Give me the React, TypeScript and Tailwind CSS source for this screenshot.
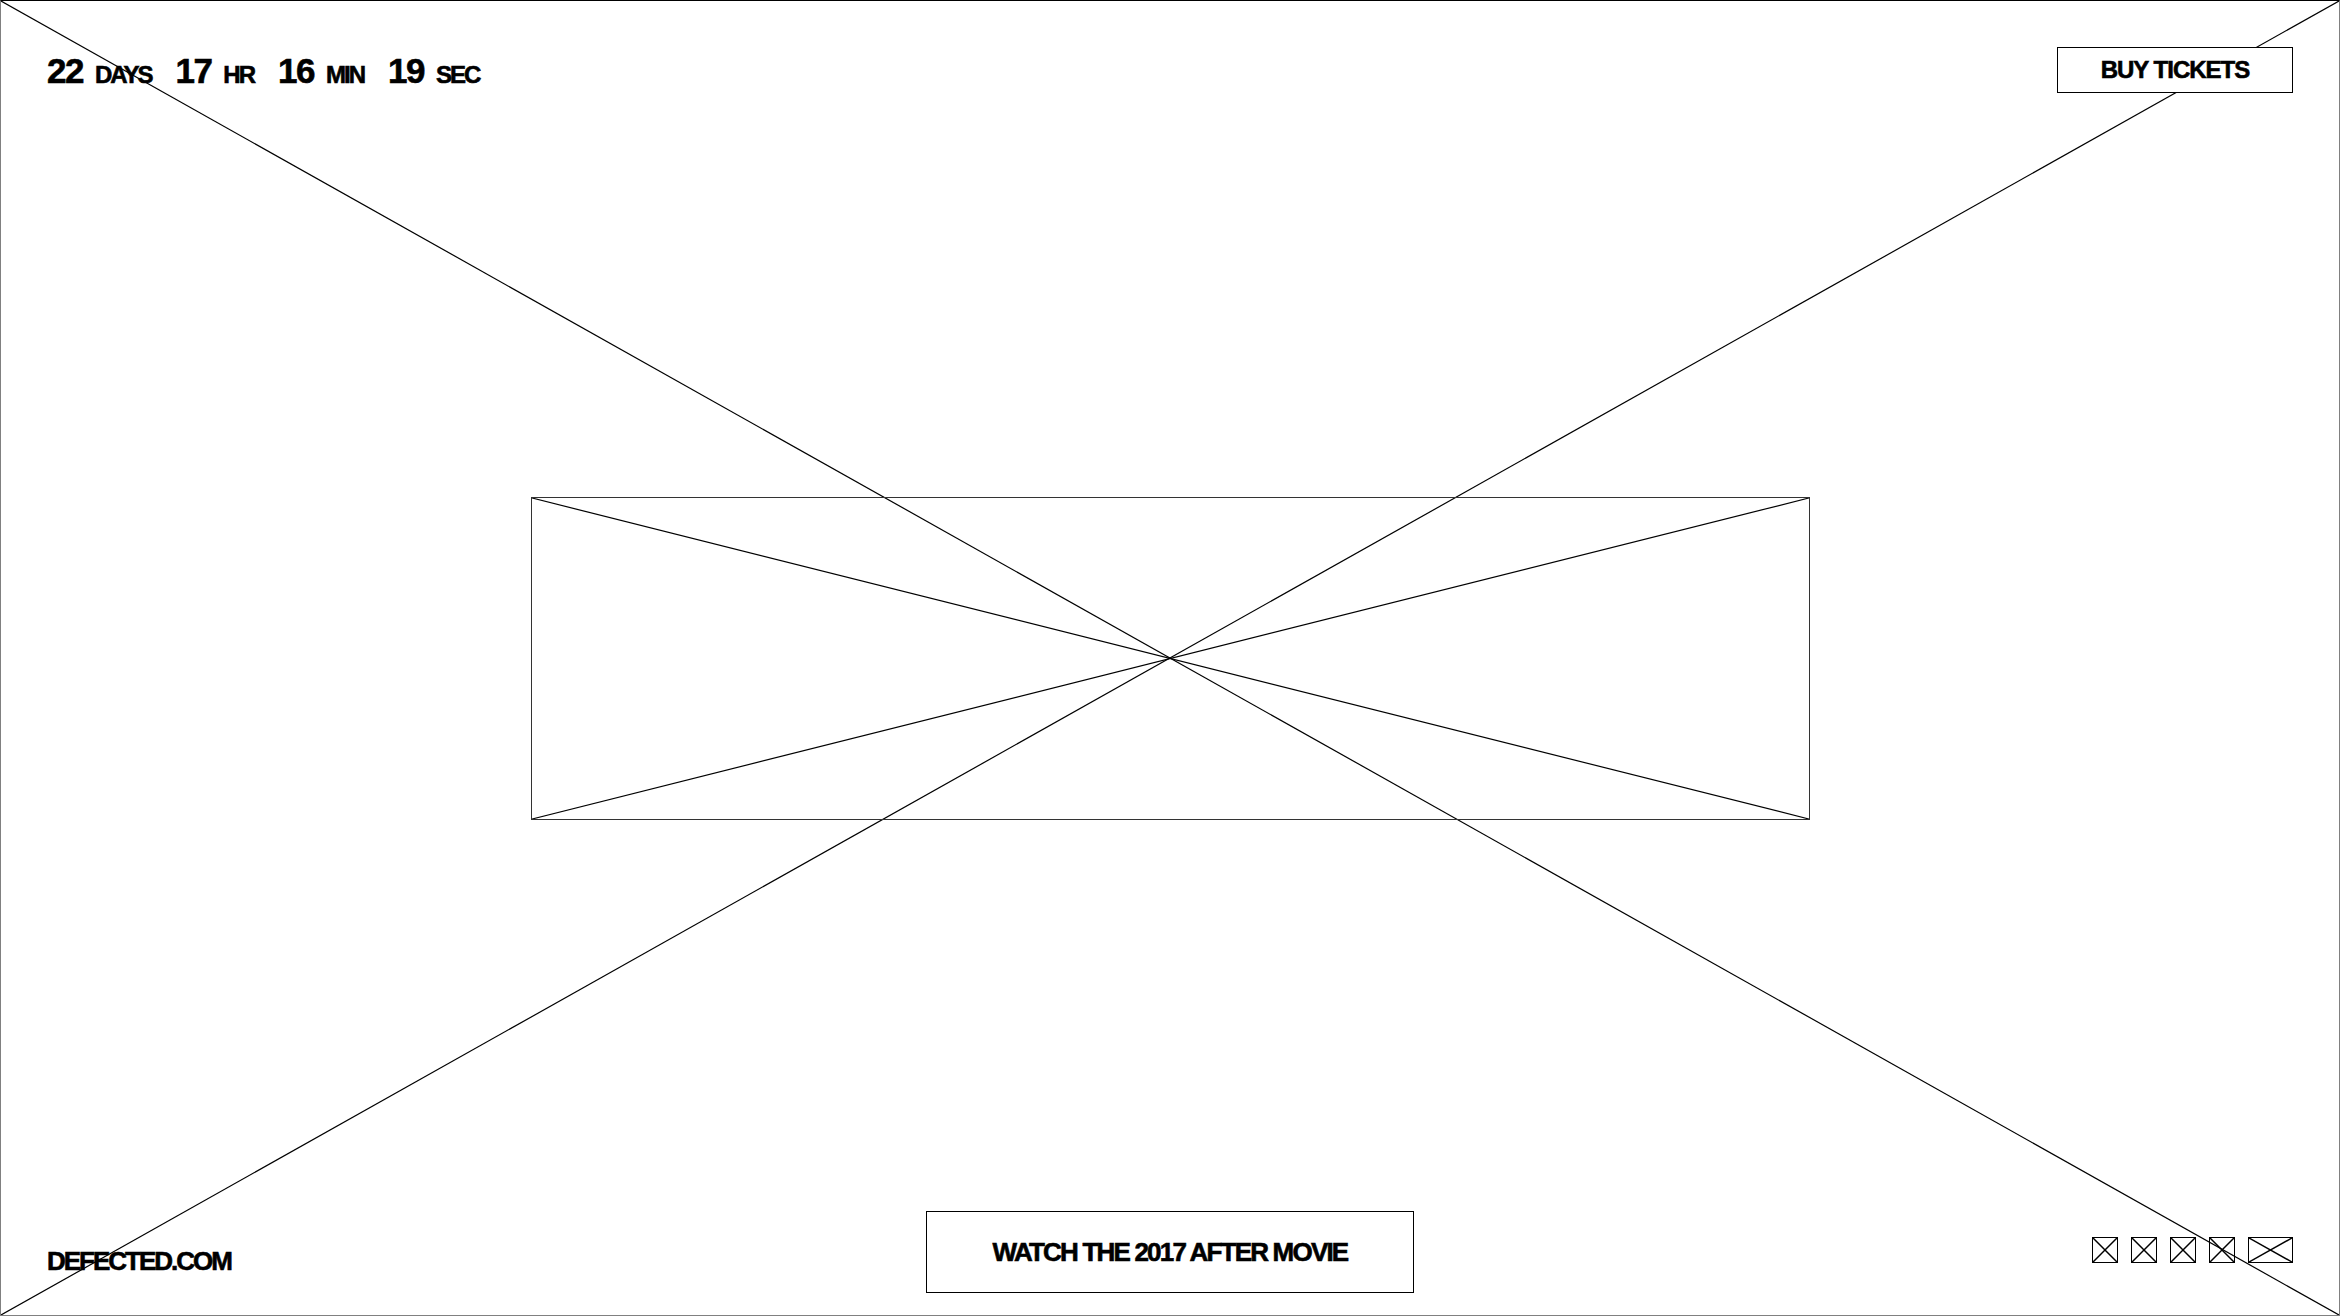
const font = { fontFamily: '"Liberation Sans", Arial, sans-serif' };

function Cross({ className = '', stroke = 1 }: { className?: string; stroke?: number }) {
    return (
        <svg className={className} viewBox="0 0 100 100" preserveAspectRatio="none">
            <line x1="0" y1="0" x2="100" y2="100" stroke="#000" strokeWidth={stroke} vectorEffect="non-scaling-stroke" />
            <line x1="100" y1="0" x2="0" y2="100" stroke="#000" strokeWidth={stroke} vectorEffect="non-scaling-stroke" />
        </svg>
    );
}

function IconBox({ wide = false }: { wide?: boolean }) {
    return (
        <div className={`${wide ? 'w-[45px]' : 'w-[26px]'} h-[26px] border-[1.5px] border-black`}>
            <Cross className="block w-full h-full" stroke={1.5} />
        </div>
    );
}

const countdown = [
    { value: '22', label: 'DAYS' },
    { value: '17', label: 'HR' },
    { value: '16', label: 'MIN' },
    { value: '19', label: 'SEC' },
];

export default function App() {
    return (
        <div
            className="relative w-full h-[1316px] bg-white text-black border border-[#808080] border-t-black overflow-hidden [-webkit-text-stroke:0.6px_black]"
            style={font}
        >
            {/* background placeholder cross */}
            <Cross className="absolute inset-0 w-full h-full pointer-events-none" stroke={1.2} />

            <div className="relative grid grid-rows-[1fr_auto_1fr] h-full">
                {/* top bar */}
                <div className="self-start flex items-center justify-between pt-[46px] px-[46px]">
                    <div className="flex items-baseline gap-[24px] font-bold">
                        {countdown.map((c) => (
                            <div key={c.label} className="flex items-baseline gap-[12px]">
                                <span className="text-[35px] leading-none tracking-[-1.5px]">{c.value}</span>
                                <span className="text-[24px] leading-none tracking-[-2px]">{c.label}</span>
                            </div>
                        ))}
                    </div>
                    <button className="w-[236px] h-[46px] border border-black bg-white flex items-center justify-center text-[24px] font-bold leading-none tracking-[-1px]">
                        BUY TICKETS
                    </button>
                </div>

                {/* hero placeholder */}
                <div className="justify-self-center w-[1279px] h-[323px] border border-[#333]">
                    <Cross className="block w-full h-full" stroke={1.2} />
                </div>

                {/* bottom bar */}
                <div className="self-end grid grid-cols-[1fr_auto_1fr] items-end px-[46px] pb-[22px]">
                    <a className="justify-self-start mb-[19px] text-[26px] font-bold leading-none tracking-[-2px]">
                        DEFECTED.COM
                    </a>
                    <button className="w-[488px] h-[82px] border border-black bg-white flex items-center justify-center text-[26px] font-bold leading-none tracking-[-1.8px]">
                        WATCH THE 2017 AFTER MOVIE
                    </button>
                    <div className="justify-self-end flex items-center gap-[13px] mb-[30px]">
                        <IconBox />
                        <IconBox />
                        <IconBox />
                        <IconBox />
                        <IconBox wide />
                    </div>
                </div>
            </div>
        </div>
    );
}
